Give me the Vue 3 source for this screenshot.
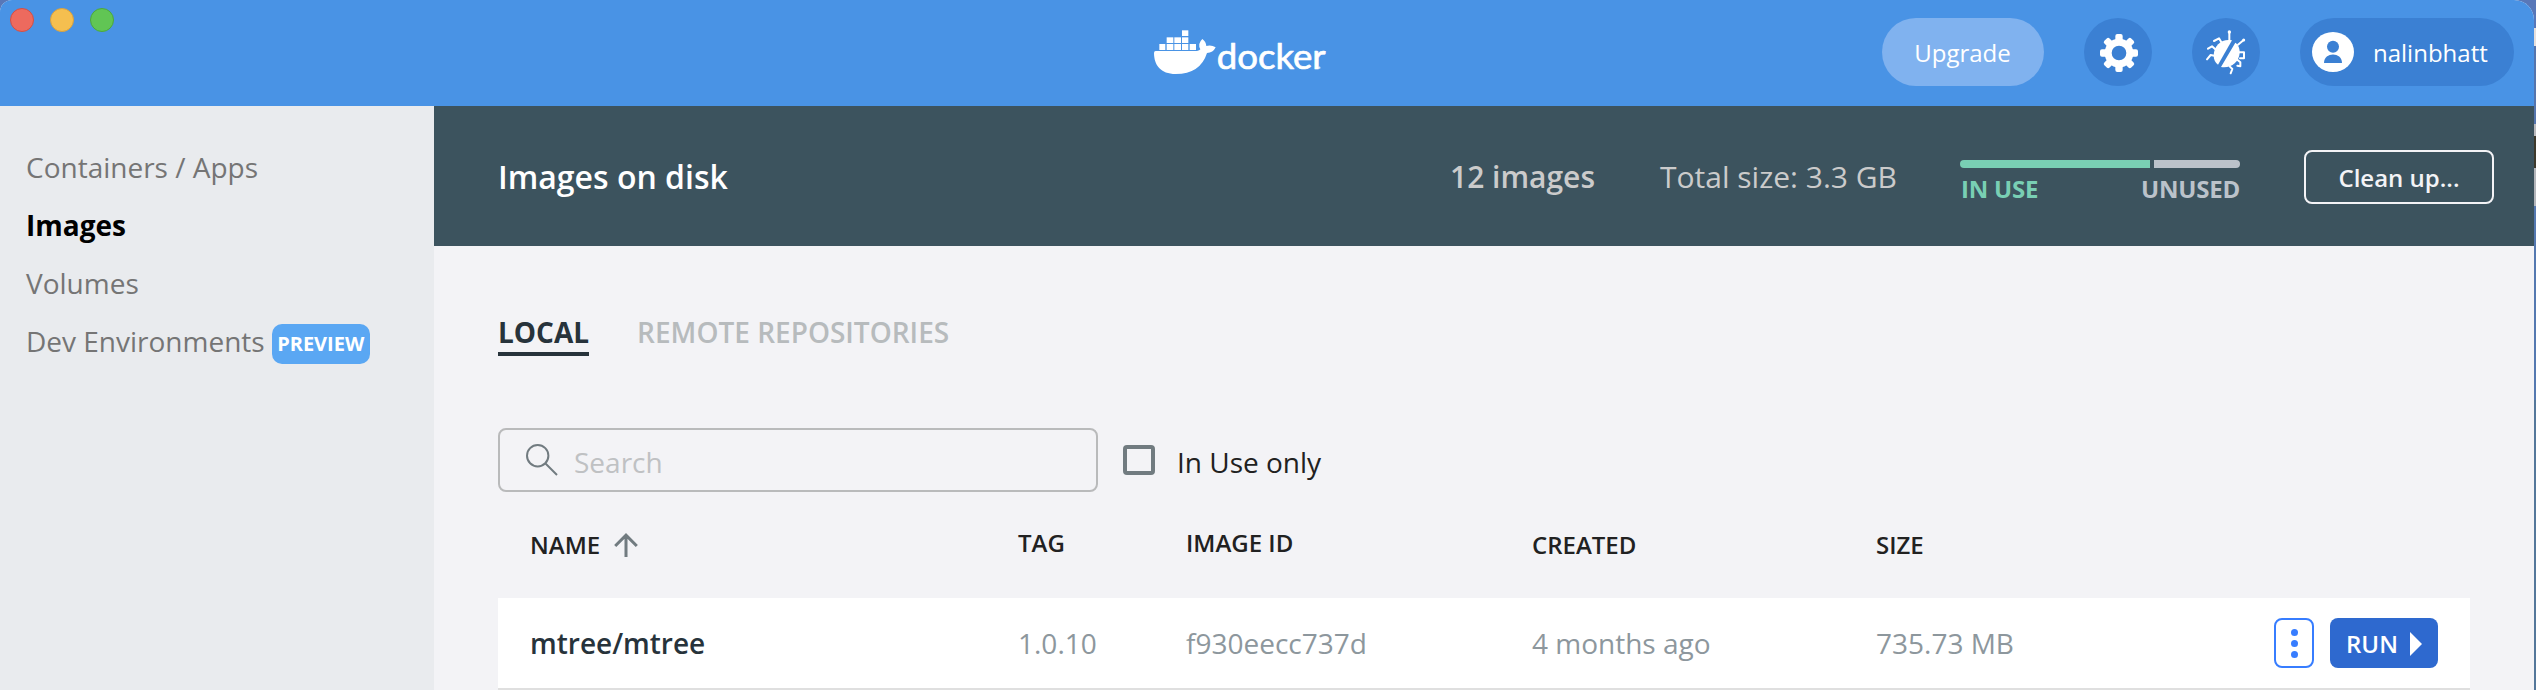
<script setup>
const nav = [
  { label: 'Containers / Apps' },
  { label: 'Images', active: true },
  { label: 'Volumes' },
  { label: 'Dev Environments', badge: 'PREVIEW' },
]
const teeth = [0, 45, 90, 135, 180, 225, 270, 315]
const images = [
  { name: 'mtree/mtree', tag: '1.0.10', id: 'f930eecc737d', created: '4 months ago', size: '735.73 MB' },
]
</script>

<template>
  <div class="desktop">
    <div class="window">
      <header class="topbar">
        <div class="lights">
          <span class="light red"></span>
          <span class="light yellow"></span>
          <span class="light green"></span>
        </div>
        <svg class="logo" viewBox="72 57 528 141" width="176" height="47">
          <g fill="#fff">
            <rect x="156" y="61" width="19" height="17" />
            <rect x="110" y="82" width="20" height="17" />
            <rect x="133" y="82" width="20" height="17" />
            <rect x="156" y="82" width="19" height="17" />
            <rect x="88" y="102" width="18" height="18" />
            <rect x="110" y="102" width="20" height="18" />
            <rect x="133" y="102" width="20" height="18" />
            <rect x="156" y="102" width="19" height="18" />
            <rect x="179" y="102" width="19" height="18" />
            <path d="M77 123H201Q209 122 211 118Q202 101 217 87Q228 95 229 108Q244 104 257 112Q249 129 231 129Q211 192 137 192C92 192 72 165 72 129Q72 123 77 123Z" />
            <circle cx="568" cy="173" r="3.5" opacity=".75" />
          </g>
          <text class="wordmark" x="260" y="177" textLength="327" lengthAdjust="spacingAndGlyphs">docker</text>
        </svg>
        <div class="actions">
          <button class="upgrade">Upgrade</button>
          <button class="round">
            <svg viewBox="12 12 204 204" width="68" height="68">
              <g fill="#fff">
                <rect v-for="a in teeth" :key="a" x="106" y="60" width="22" height="30" rx="6" :transform="`rotate(${a} 117 117)`" />
              </g>
              <circle cx="117" cy="117" r="32.5" fill="none" stroke="#fff" stroke-width="21" />
            </svg>
          </button>
          <button class="round">
            <svg viewBox="336 12 204 204" width="68" height="68">
              <g fill="none" stroke="#fff" stroke-width="6" stroke-linecap="round" stroke-linejoin="round">
                <path d="M448 78V54M474 92L491 78M425 86L417 73L402 81M406 106L396 97L384 104M403 125L392 123L381 136M477 115H492V133H480M472 137L481 145V157L472 155M449 157L457 165L452 178" />
              </g>
              <g fill="#fff">
                <circle cx="448" cy="54" r="5" />
                <circle cx="491" cy="78" r="4.500" />
                <path d="M456 79C427 73 402 92 401 124C401 138 406 147 414 152Z" />
                <path d="M466 86L423 159C452 164 477 145 479 117C480 104 475 92 466 86Z" />
              </g>
            </svg>
          </button>
          <button class="user">
            <svg viewBox="696 54 126 120" width="42" height="40">
              <ellipse cx="759" cy="114" rx="63" ry="60" fill="#fff" />
              <circle cx="759" cy="98" r="18" fill="#3b80d3" />
              <path d="M732 147C732 113 786 113 786 147Z" fill="#3b80d3" />
            </svg>
            <span>nalinbhatt</span>
          </button>
        </div>
      </header>

      <div class="body">
        <nav class="sidebar">
          <a v-for="item in nav" :key="item.label" class="nav-item" :class="{ active: item.active }">
            <span>{{ item.label }}</span>
            <span v-if="item.badge" class="badge">{{ item.badge }}</span>
          </a>
        </nav>

        <main class="main">
          <section class="summary">
            <h1 class="title">Images on disk</h1>
            <span class="count">12 images</span>
            <span class="total">Total size: 3.3 GB</span>
            <div class="usage">
              <div class="bars"><span class="bar used"></span><span class="bar free"></span></div>
              <div class="labels"><span class="in-use">IN USE</span><span class="unused">UNUSED</span></div>
            </div>
            <button class="cleanup">Clean up...</button>
          </section>

          <section class="content">
            <div class="tabs">
              <a class="tab current">LOCAL</a>
              <a class="tab remote">REMOTE REPOSITORIES</a>
            </div>

            <div class="filters">
              <div class="search">
                <svg viewBox="0 0 32 32" width="32" height="32" fill="none" stroke="#717b80" stroke-width="2">
                  <circle cx="11.700" cy="11.700" r="10.700" />
                  <path d="M19.500 19.500L31 31" />
                </svg>
                <span>Search</span>
              </div>
              <span class="checkbox"></span>
              <span class="check-label">In Use only</span>
            </div>

            <div class="grid head">
              <div class="cell low name-head">
                <span>NAME</span>
                <svg viewBox="0 0 24 24" width="24" height="24" fill="none" stroke="#717b80" stroke-width="3">
                  <path d="M12 24V2M1.200 13L12 2.200L22.800 13" />
                </svg>
              </div>
              <div class="cell tag-head">TAG</div>
              <div class="cell id-head">IMAGE ID</div>
              <div class="cell low">CREATED</div>
              <div class="cell low">SIZE</div>
            </div>

            <div v-for="img in images" :key="img.id" class="grid row">
              <div class="name">{{ img.name }}</div>
              <div>{{ img.tag }}</div>
              <div>{{ img.id }}</div>
              <div>{{ img.created }}</div>
              <div>{{ img.size }}</div>
              <div class="row-actions">
                <button class="more"><i></i><i></i><i></i></button>
                <button class="run">
                  <span>RUN</span>
                  <svg viewBox="0 0 12 24" width="12" height="24"><path d="M0 0L12 12L0 24Z" fill="#fff" /></svg>
                </button>
              </div>
            </div>
          </section>
        </main>
      </div>
    </div>
  </div>
</template>

<style>
body {
  margin: 0;
  overflow: hidden;
}
</style>

<style scoped>
* {
  box-sizing: border-box;
}
.desktop {
  width: 2536px;
  height: 690px;
  overflow: hidden;
  font-family: "Open Sans", "Noto Sans", sans-serif;
  font-size: 28px;
  white-space: nowrap;
  background: linear-gradient(#5877b8 0 28px, #e6dfdc 28px 46px, #5575ad 46px 124px, #b9b9bd 124px 136px, #3d392c 136px 168px, #b4b6bb 168px 206px, #5478b0 206px 400px, #54779a 400px);
}
.window {
  width: 2534px;
  height: 690px;
  border-radius: 12px 20px 0 0;
  overflow: hidden;
  background: #f3f3f6;
}
button {
  font-family: inherit;
  border: 0;
  padding: 0;
  margin: 0;
  color: #fff;
}
.topbar {
  height: 106px;
  background: #4993e5;
  display: flex;
  align-items: flex-start;
}
.lights {
  display: flex;
  gap: 16px;
  padding: 8px 0 0 10px;
  width: 1154px;
}
.light {
  width: 24px;
  height: 24px;
  border-radius: 50%;
  border: 1px solid;
}
.red {
  background: #ed6a5e;
  border-color: #d14f45;
}
.yellow {
  background: #f5bf4f;
  border-color: #d6a040;
}
.green {
  background: #61c554;
  border-color: #4ca73c;
}
.logo {
  margin-top: 29px;
  overflow: visible;
}
.wordmark {
  font-family: Lato, sans-serif;
  font-size: 104px;
  fill: #fff;
  stroke: #fff;
  stroke-width: 2;
  stroke-linejoin: round;
}
.actions {
  margin: 18px 20px 0 auto;
  display: flex;
  height: 68px;
}
.upgrade {
  width: 162px;
  border-radius: 34px;
  background: #80b2ef;
  font-size: 24px;
  line-height: 68px;
  margin-right: 40px;
  padding: 1px 1px 0 0;
}
.round {
  width: 68px;
  height: 68px;
  border-radius: 50%;
  background: #3b80d3;
  margin-right: 40px;
}
.round svg {
  display: block;
}
.user {
  width: 214px;
  border-radius: 34px;
  background: #3b80d3;
  display: flex;
  align-items: center;
  padding-left: 12px;
  font-size: 24px;
}
.user span {
  margin-left: 19px;
}
.body {
  display: flex;
  height: 584px;
}
.sidebar {
  width: 434px;
  background: #e9ebee;
  padding: 32px 0 0 26px;
}
.nav-item {
  display: flex;
  align-items: center;
  height: 58px;
  line-height: 58px;
  color: #757575;
}
.nav-item.active {
  color: #000;
  font-weight: 700;
}
.badge {
  width: 98px;
  height: 40px;
  line-height: 40px;
  margin: 6px 0 0 7px;
  border-radius: 10px;
  background: #5aa7f3;
  color: #fff;
  font-size: 20px;
  font-weight: 700;
  text-align: center;
}
.main {
  flex: 1;
}
.summary {
  height: 140px;
  background: #3c535e;
  display: flex;
  align-items: center;
  padding: 0 40px 0 64px;
}
.title {
  margin: 0;
  flex: 1;
  font-size: 32px;
  font-weight: 600;
  color: #fff;
}
.count {
  font-size: 30px;
  font-weight: 600;
  color: #cbcbcb;
  width: 210px;
}
.total {
  font-size: 30px;
  color: #cbcbcb;
  width: 300px;
}
.usage {
  width: 280px;
  margin-right: 64px;
  height: 32px;
}
.bars {
  display: flex;
  gap: 4px;
  height: 8px;
}
.bar.used {
  width: 190px;
  background: #79cfb4;
  border-radius: 4px 0 0 4px;
}
.bar.free {
  width: 86px;
  background: #bbc2ca;
  border-radius: 0 4px 4px 0;
}
.labels {
  display: flex;
  justify-content: space-between;
  font-size: 24px;
  line-height: 32px;
  font-weight: 700;
  letter-spacing: -0.2px;
  margin-top: 5px;
  padding-left: 1px;
}
.in-use {
  color: #79cfb4;
}
.unused {
  color: #bbc2ca;
}
.cleanup {
  width: 190px;
  height: 54px;
  margin-top: 2px;
  border: 2px solid #f3f3f6;
  border-radius: 8px;
  background: transparent;
  color: #f3f3f6;
  font-size: 24px;
  font-weight: 600;
}
.content {
  padding: 0 64px;
}
.tabs {
  display: flex;
  gap: 48px;
  padding-top: 66px;
}
.tab {
  height: 44px;
  line-height: 40px;
  font-weight: 600;
  color: #b7bbbd;
}
.tab.current {
  color: #27333b;
  font-weight: 700;
  border-bottom: 4px solid #27333b;
}
.filters {
  display: flex;
  align-items: center;
  height: 64px;
  margin-top: 72px;
}
.search {
  width: 600px;
  height: 64px;
  border: 2px solid #b9babb;
  border-radius: 8px;
  display: flex;
  align-items: center;
  padding-left: 26px;
  color: #bfc1c3;
}
.search span {
  margin: 3px 0 0 16px;
}
.checkbox {
  width: 32px;
  height: 30px;
  border: 4px solid #717b80;
  border-radius: 4px;
  margin: 0 22px 0 25px;
}
.check-label {
  color: #212121;
  margin-top: 3px;
}
.grid {
  display: grid;
  grid-template-columns: 488px 168px 346px 344px 398px 1fr;
  padding-left: 32px;
}
.head {
  height: 106px;
  font-size: 24px;
  line-height: 40px;
  font-weight: 600;
  color: #212121;
  padding-top: 31px;
}
.low {
  padding-top: 2px;
}
.name-head {
  display: flex;
  height: 42px;
  align-items: center;
}
.name-head svg {
  margin-left: 14px;
}
.row {
  width: 1972px;
  height: 92px;
  background: #fff;
  border-bottom: 2px solid #dfdfdf;
  line-height: 90px;
  color: #8d979d;
}
.row .name {
  color: #27333b;
  font-weight: 600;
}
.row-actions {
  display: flex;
  align-items: center;
  gap: 16px;
}
.more {
  width: 40px;
  height: 50px;
  border: 2px solid #377dff;
  border-radius: 8px;
  background: #fff;
  display: flex;
  flex-direction: column;
  align-items: center;
  justify-content: center;
  gap: 4px;
}
.more i {
  width: 7px;
  height: 7px;
  border-radius: 50%;
  background: #377dff;
}
.run {
  width: 108px;
  height: 50px;
  border-radius: 8px;
  background: #2e69cf;
  font-size: 24px;
  font-weight: 600;
  display: flex;
  align-items: center;
  padding-left: 16px;
}
.run svg {
  margin: 2px 0 0 12px;
}
</style>
